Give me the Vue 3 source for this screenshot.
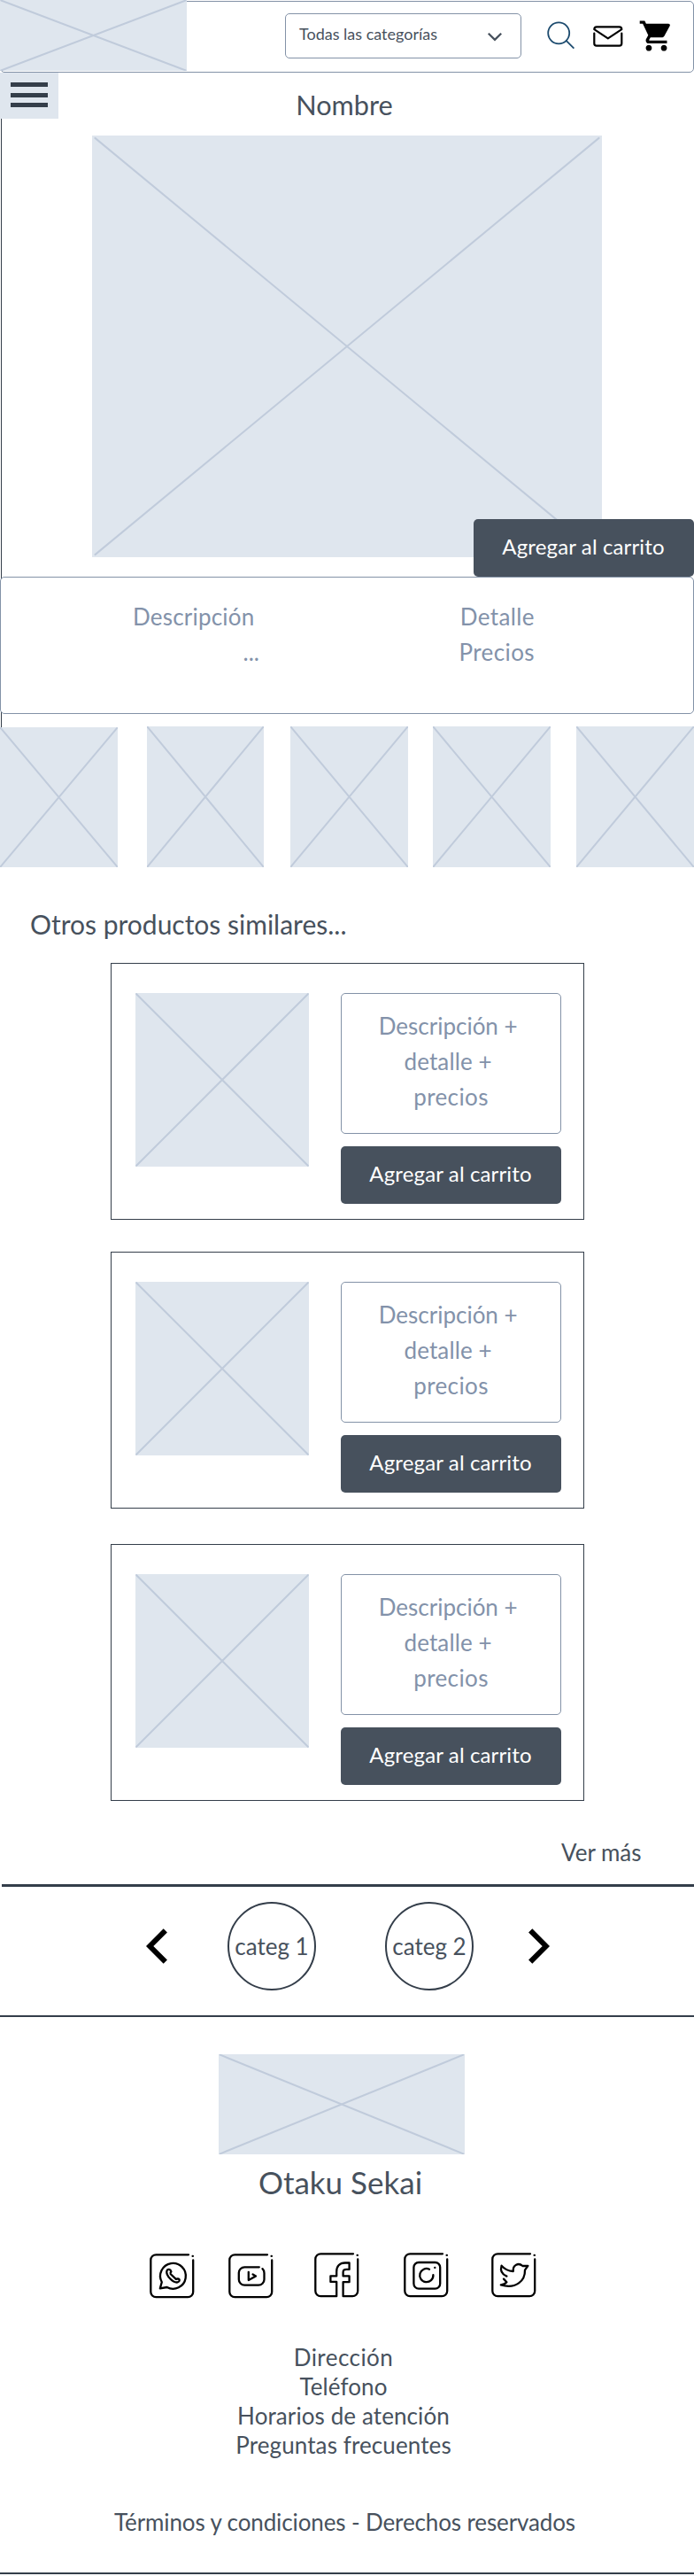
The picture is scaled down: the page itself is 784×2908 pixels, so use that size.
<script setup>
import { h } from 'vue'

// Crossed box that stands in for an image.
const Placeholder = () =>
  h('svg', { class: 'ph', viewBox: '0 0 100 100', preserveAspectRatio: 'none' }, [
    h('path', {
      d: 'M0.6 0.6L99.4 99.4M99.4 0.6L0.6 99.4',
      fill: 'none',
      stroke: '#c0cbdb',
      'stroke-width': 2,
      'stroke-linecap': 'round',
      'vector-effect': 'non-scaling-stroke'
    })
  ])

const frame = 'M44 1.3H7.3a6 6 0 0 0-6 6V43.2a6 6 0 0 0 6 6H43.2a6 6 0 0 0 6-6V7.4M48.6 2.9h.3'

const socials = [
  {
    name: 'whatsapp',
    paths: [
      frame,
      'M11.8 39.4L13.8 32.2A14.4 14.4 0 1 1 19.6 38Z',
      'M23.6 21.6L24.4 20.4C23.6 17.6 20.4 17 19.4 19.6C18.2 25.4 27 33.4 31.6 32.4C34.4 31.6 34.4 28.8 31.8 28.4L29.8 28.9L23.6 23'
    ]
  },
  {
    name: 'youtube',
    paths: [
      frame,
      'M34.8 15.3H18.3a6.5 6.5 0 0 0-6.5 6.5v7.4a6.5 6.5 0 0 0 6.5 6.5H34a6.5 6.5 0 0 0 6.5-6.5V22q0-3-2-4.9',
      'M22.8 20.8V30L31 25.4L27.6 23.4'
    ]
  },
  {
    name: 'facebook',
    paths: [
      'M44 1.3H7.3a6 6 0 0 0-6 6V43.2a6 6 0 0 0 6 6H25.2V32.9H18.4V26.4H25.2V21.4C25.2 15 29 11.5 34.6 11.5H39.6V18.9H36.4C33.4 18.9 32.6 19.8 32.6 22.2V26.4H39.6V33.2H32.6V49.2H43.2a6 6 0 0 0 6-6V7.4M48.6 2.9h.3'
    ]
  },
  {
    name: 'instagram',
    paths: [
      frame,
      'M17 11H35.6a5.6 5.6 0 0 1 5.6 5.6V35a5.6 5.6 0 0 1-5.6 5.6H17A5.6 5.6 0 0 1 11.4 35V16.6A5.6 5.6 0 0 1 17 11Z',
      'M29 18.7A7.6 7.6 0 1 0 33.4 25.2M35.2 16.9h.2'
    ]
  },
  {
    name: 'twitter',
    paths: [
      frame,
      'M17.4 26.6C12 24.4 10 20 11.6 14.6C15 18.8 19.4 20.6 24.8 21C24 13.6 30.8 11 35.4 15L41.4 14.8L38 19.6C38.4 31.6 28 41.4 10.8 36.4C13.8 36 16 35 17.4 33.2L14 29.6'
    ]
  }
]

const products = [1, 2, 3]
const lines = ['Descripción + ', 'detalle + ', 'precios']
const contact = ['Dirección', 'Teléfono', 'Horarios de atención', 'Preguntas frecuentes']
</script>

<template>
  <div class="page">
    <header class="top">
      <div class="logo"><Placeholder /></div>
      <div class="select">
        <span>Todas las categorías</span>
        <svg width="18" height="11" viewBox="0 0 18 11"><path d="M1.8 1.8L9 8.8L16.2 1.8" fill="none" stroke="#47515d" stroke-width="2.3" /></svg>
      </div>
      <svg class="search" width="32" height="32" viewBox="0 0 32 32" fill="none" stroke="#1b4a6e" stroke-width="1.8">
        <circle cx="13.2" cy="13.3" r="12" /><path d="M21.6 21.8L30.4 30.6" />
      </svg>
      <svg class="mail" width="34" height="24" viewBox="0 0 34 24" fill="none" stroke="#000" stroke-width="2.2" stroke-linecap="round" stroke-linejoin="round">
        <path d="M1.3 4.2Q1.3 1.3 4 1.3H29.6Q32.3 1.3 32.3 4.2L16.8 14.4Z" />
        <path d="M1.3 8.6V20Q1.3 22.7 4 22.7H29.6Q32.3 22.7 32.3 20V8.6" />
      </svg>
      <svg class="cart" width="41" height="41" viewBox="0 0 24 24">
        <path d="M7 18c-1.1 0-1.99.9-1.99 2S5.9 22 7 22s2-.9 2-2-.9-2-2-2zM1 2v2h2l3.6 7.59-1.35 2.45c-.16.28-.25.61-.25.96 0 1.1.9 2 2 2h12v-2H7.42c-.14 0-.25-.11-.25-.25l.03-.12.9-1.63h7.45c.75 0 1.41-.41 1.75-1.03l3.58-6.49c.08-.14.12-.31.12-.48 0-.55-.45-1-1-1H5.21l-.94-2H1zm16 16c-1.1 0-1.99.9-1.99 2s.89 2 1.99 2 2-.9 2-2-.9-2-2-2z" />
      </svg>
    </header>

    <section class="product">
      <div class="title-row">
        <div class="burger"><i /><i /><i /></div>
        <h1>Nombre</h1>
      </div>
      <div class="hero"><Placeholder /></div>
      <div class="btn hero-btn">Agregar al carrito</div>
      <div class="info">
        <div class="col-a"><span class="label">Descripción</span><span class="dots">...</span></div>
        <div class="col-b"><span>Detalle</span><span>Precios</span></div>
      </div>
    </section>

    <div class="thumbs">
      <div v-for="n in 5" :key="n" class="thumb"><Placeholder /></div>
    </div>

    <h2>Otros productos similares...</h2>
    <div class="cards">
      <article v-for="p in products" :key="p" class="card">
        <div class="pic"><Placeholder /></div>
        <div class="side">
          <div class="desc"><span v-for="l in lines" :key="l">{{ l }}</span></div>
          <div class="btn">Agregar al carrito</div>
        </div>
      </article>
    </div>
    <div class="more">Ver más</div>

    <div class="rule"></div>
    <nav class="categories">
      <svg width="24" height="40" viewBox="0 0 24 40"><path d="M21.8 2.4L4.2 20L21.8 37.6" fill="none" stroke="#000" stroke-width="6" /></svg>
      <div class="circle">categ 1</div>
      <div class="circle">categ 2</div>
      <svg width="24" height="40" viewBox="0 0 24 40"><path d="M2.2 2.4L19.8 20L2.2 37.6" fill="none" stroke="#000" stroke-width="6" /></svg>
    </nav>

    <footer>
      <div class="foot-logo"><Placeholder /></div>
      <div class="brand">Otaku Sekai</div>
      <div class="socials">
        <svg v-for="s in socials" :key="s.name" :class="s.name" width="51" height="51" viewBox="0 0 51 51" fill="none" stroke="#000" stroke-width="2.3" stroke-linecap="round" stroke-linejoin="round">
          <path v-for="d in s.paths" :key="d" :d="d" />
        </svg>
      </div>
      <div class="contact"><span v-for="c in contact" :key="c">{{ c }}</span></div>
      <div class="legal">Términos y condiciones - Derechos reservados</div>
    </footer>
  </div>
</template>

<style>
body { background: #fff; }
.ph { display: block; width: 100%; height: 100%; background: #dfe6ee; overflow: hidden; }
</style>

<style scoped>
.page {
  width: 784px;
  height: 2908px;
  padding-top: 1px;
  box-sizing: border-box;
  font-family: Lato, sans-serif;
  color: #47515d;
  overflow: hidden;
}
.page * { box-sizing: border-box; }
h1, h2 { margin: 0; font-weight: 400; }

.top {
  display: flex;
  height: 81px;
  border: 1px solid #8392a7;
  border-radius: 5px;
}
.top > * { flex-shrink: 0; }
.logo { width: 211px; height: 80px; margin: -2px 0 0 -1px; }
.select {
  display: flex;
  justify-content: space-between;
  align-items: center;
  width: 267px;
  height: 51px;
  margin: 13px 0 0 111px;
  padding: 0 20px 5px 15px;
  border: 1px solid #8392a7;
  border-radius: 5px;
  font-size: 18px;
}
.select svg { margin-top: 7px; }
.search { margin: 22px 0 0 29px; }
.mail { margin: 27px 0 0 20px; }
.cart { margin: 18px 0 0 17px; }

.product { position: relative; }
.product::before {
  content: '';
  position: absolute;
  left: 1px;
  top: 0;
  width: 1px;
  height: 739px;
  background: #343e4a;
}
.title-row { display: flex; height: 71px; }
.burger {
  position: relative;
  display: flex;
  flex-direction: column;
  gap: 6.5px;
  width: 66px;
  height: 52px;
  padding: 11px 12px;
  background: #dfe6ee;
}
.burger i { height: 5px; background: #343e4a; }
h1 { width: 646px; text-align: center; font-size: 30.7px; line-height: 40px; padding-top: 17px; }
.hero { width: 576px; height: 476px; margin-left: 104px; }
.btn {
  display: flex;
  align-items: center;
  justify-content: center;
  width: 249px;
  height: 65px;
  padding: 0 1px 5px 0;
  border-radius: 5px;
  background: #47515d;
  color: #fff;
  font-size: 24px;
  letter-spacing: 0.13px;
}
.hero-btn { position: relative; margin: -43px 0 0 535px; }
.info {
  position: relative;
  display: flex;
  height: 155px;
  padding-top: 24px;
  border: 1px solid #8392a7;
  border-radius: 5px;
  background: #fff;
  color: #8392aa;
  font-size: 26px;
  line-height: 40px;
}
.info span { display: block; }
.label { letter-spacing: 0.2px; }
.col-a { width: 143px; margin-left: 149px; }
.dots { text-align: right; }
.col-b { width: 311px; text-align: right; letter-spacing: 0.4px; }

.thumbs { display: flex; gap: 28px; height: 159px; margin-top: 14px; }
.thumb { flex: none; width: 133px; }
.thumb:first-child { padding-top: 1px; }
.thumb:nth-child(2) { margin-left: 5px; width: 132px; }
.thumb:nth-child(3) { margin-left: 2px; }
.thumb:nth-child(5) { margin-left: 1px; }

h2 { margin: 44px 0 0 34px; font-size: 30px; line-height: 40px; }
.cards { display: flex; flex-direction: column; margin: 24px 0 0 125px; }
.card {
  display: flex;
  gap: 36px;
  width: 535px;
  height: 290px;
  margin-bottom: 36px;
  padding: 33px 0 0 27px;
  border: 1px solid #343e4a;
}
.card:nth-child(2) { margin-bottom: 40px; }
.card:last-child { margin-bottom: 0; }
.pic { flex: none; width: 196px; height: 196px; }
.side { flex: none; width: 249px; }
.desc {
  width: 249px;
  height: 159px;
  margin-bottom: 14px;
  padding-top: 16px;
  border: 1px solid #8392a7;
  border-radius: 5px;
  text-align: center;
  color: #8392aa;
  font-size: 26px;
  line-height: 40px;
}
.desc span { display: block; white-space: pre; }
.desc span:nth-child(2) { letter-spacing: 0.12px; }
.desc span:nth-child(3) { letter-spacing: 0.4px; }

.more { margin: 38px 0 0 634px; font-size: 26px; line-height: 40px; }
.rule { height: 3px; margin: 16px 0 0 2px; background: #343e4a; }
.categories {
  display: flex;
  align-items: center;
  height: 147px;
  padding: 0 0 11px 165px;
  border-bottom: 2px solid #343e4a;
}
.categories > * { flex-shrink: 0; }
.circle {
  display: flex;
  align-items: center;
  justify-content: center;
  width: 100px;
  height: 100px;
  padding-bottom: 1px;
  border: 2px solid #343e4a;
  border-radius: 50%;
  font-size: 26px;
  margin-left: 68px;
  white-space: nowrap;
}
.circle + .circle { margin: 0 62px 0 78px; }

footer { display: flow-root; height: 629px; border-bottom: 2px solid #343e4a; }
.foot-logo { width: 278px; height: 113px; margin: 42px 0 0 247px; }
.brand { width: 769px; margin-top: 11px; text-align: center; font-size: 35px; line-height: 40px; }
.socials { display: flex; margin: 60px 0 0 169px; height: 52px; }
.whatsapp, .youtube { margin-top: 1px; }
.youtube { margin-left: 38px; }
.facebook { margin-left: 46px; }
.instagram { margin-left: 50px; }
.twitter { margin-left: 48px; }
.contact { width: 776px; margin-top: 50px; text-align: center; font-size: 26px; line-height: 33px; }
.contact span { display: block; letter-spacing: 0.1px; }
.contact span:first-child { letter-spacing: 0.45px; }
.legal { width: 779px; margin-top: 53.5px; text-align: center; font-size: 26px; line-height: 33px; letter-spacing: -0.12px; }
</style>
